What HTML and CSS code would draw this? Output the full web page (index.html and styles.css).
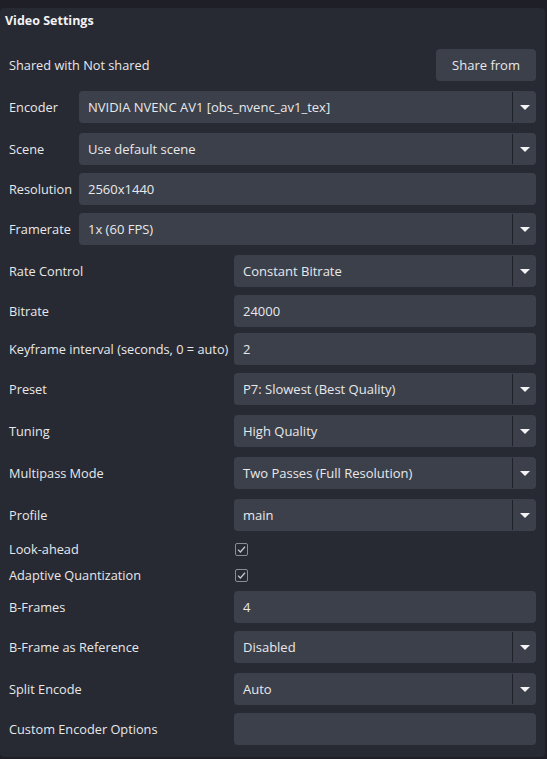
FILE: index.html
```html
<!DOCTYPE html>
<html>
<head>
<meta charset="utf-8">
<link rel="stylesheet" href="styles.css">
</head>
<body>
<div class="panel">
  <div class="heading">Video Settings</div>
  <div class="share-row">
    <span class="label">Shared with Not shared</span>
    <button class="btn">Share from</button>
  </div>
  <div class="form top">
    <div class="row combo"><span class="label">Encoder</span><div class="field select"><span class="val">NVIDIA NVENC AV1 [obs_nvenc_av1_tex]</span><span class="arrow"></span></div></div>
    <div class="row combo"><span class="label">Scene</span><div class="field select"><span class="val">Use default scene</span><span class="arrow"></span></div></div>
    <div class="row"><span class="label">Resolution</span><div class="field edit"><span class="val">2560x1440</span></div></div>
    <div class="row combo"><span class="label">Framerate</span><div class="field select"><span class="val">1x (60 FPS)</span><span class="arrow"></span></div></div>
  </div>
  <div class="form bottom">
    <div class="row combo"><span class="label">Rate Control</span><div class="field select"><span class="val">Constant Bitrate</span><span class="arrow"></span></div></div>
    <div class="row"><span class="label">Bitrate</span><div class="field edit"><span class="val">24000</span></div></div>
    <div class="row"><span class="label">Keyframe interval (seconds, 0 = auto)</span><div class="field edit"><span class="val">2</span></div></div>
    <div class="row combo"><span class="label">Preset</span><div class="field select"><span class="val">P7: Slowest (Best Quality)</span><span class="arrow"></span></div></div>
    <div class="row combo"><span class="label">Tuning</span><div class="field select"><span class="val">High Quality</span><span class="arrow"></span></div></div>
    <div class="row combo"><span class="label">Multipass Mode</span><div class="field select"><span class="val">Two Passes (Full Resolution)</span><span class="arrow"></span></div></div>
    <div class="row combo"><span class="label">Profile</span><div class="field select"><span class="val">main</span><span class="arrow"></span></div></div>
    <div class="row check"><span class="label">Look-ahead</span><span class="box"><svg width="11" height="11" viewBox="0 0 11 11"><path d="M2 5.6 L4.4 8 L9 2.8" fill="none" stroke="#c4c6cc" stroke-width="1.3"/></svg></span></div>
    <div class="row check"><span class="label">Adaptive Quantization</span><span class="box"><svg width="11" height="11" viewBox="0 0 11 11"><path d="M2 5.6 L4.4 8 L9 2.8" fill="none" stroke="#c4c6cc" stroke-width="1.3"/></svg></span></div>
    <div class="row"><span class="label">B-Frames</span><div class="field edit"><span class="val">4</span></div></div>
    <div class="row combo"><span class="label">B-Frame as Reference</span><div class="field select"><span class="val">Disabled</span><span class="arrow"></span></div></div>
    <div class="row combo"><span class="label">Split Encode</span><div class="field select"><span class="val">Auto</span><span class="arrow"></span></div></div>
    <div class="row"><span class="label">Custom Encoder Options</span><div class="field edit"><span class="val"></span></div></div>
  </div>
</div>
</body>
</html>
```
FILE: styles.css
```css
html, body {
  margin: 0;
  padding: 0;
  background: #1e1f27;
}
body {
  width: 547px;
  height: 759px;
  overflow: hidden;
  font-family: "Open Sans", "Noto Sans", sans-serif;
  font-size: 13px;
  color: #e8e8ea;
}
.panel {
  margin-top: 8px;
  width: 545px;
  height: 749px;
  background: #272a33;
  border-radius: 4px;
  box-sizing: border-box;
  padding: 0 9px 0 9px;
}
.heading {
  font-weight: 700;
  font-size: 12.5px;
  height: 26px;
  line-height: 26px;
  margin-left: -4px;
  color: #f2f2f4;
}
.share-row {
  display: flex;
  align-items: center;
  justify-content: space-between;
  margin-top: 15px;
}
.btn {
  width: 100px;
  height: 32px;
  background: #3c404b;
  border: none;
  border-radius: 4px;
  color: #e8e8ea;
  font: inherit;
  padding: 0;
}
.form {
  display: flex;
  flex-direction: column;
  gap: 6px;
}
.form.top { margin-top: 8px; }
.form.bottom { margin-top: 6px; }
.row {
  display: flex;
  align-items: center;
}
.row.combo { margin: 2px 0; }
.top .label { width: 70px; flex: none; }
.bottom .label { width: 225px; flex: none; }
.label { white-space: nowrap; font-size: 12.75px; }
.field {
  flex: 1;
  height: 32px;
  background: #3c404b;
  border-radius: 4px;
  display: flex;
  align-items: center;
}
.val {
  flex: 1;
  padding-left: 9px;
  white-space: nowrap;
}
.arrow {
  width: 23px;
  height: 30px;
  border-left: 1px solid #1f2129;
  position: relative;
}
.arrow::after {
  content: "";
  position: absolute;
  left: 7px;
  top: 13px;
  border-left: 5px solid transparent;
  border-right: 5px solid transparent;
  border-top: 5px solid #f4f4f6;
}
.row.check { height: 20px; }
.box {
  width: 13px;
  height: 13px;
  box-sizing: border-box;
  border: 1px solid #8a8d97;
  border-radius: 2px;
  margin-left: 1px;
  display: flex;
  align-items: center;
  justify-content: center;
}
.box svg { display: block; }
```
